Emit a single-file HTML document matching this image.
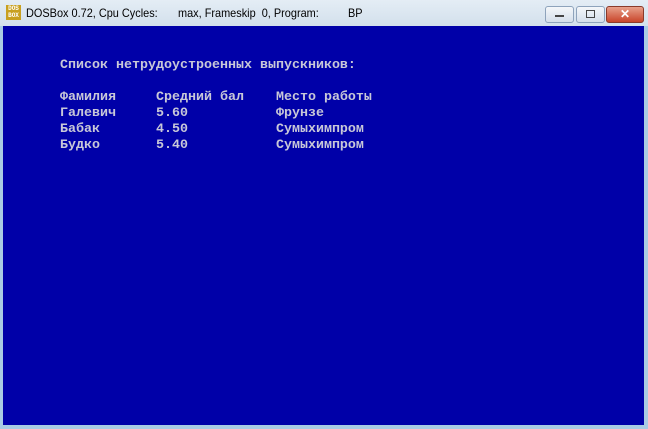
<!DOCTYPE html>
<html><head><meta charset="utf-8"><style>
body{margin:0;width:648px;height:429px;overflow:hidden;background:#a9cbe4;font-family:"Liberation Sans",sans-serif;position:relative}
.tb{position:absolute;left:0;top:0;width:648px;height:26px;background:linear-gradient(#e4edf5,#d3e0ec);}
.scr{position:absolute;left:3px;top:26px;width:641px;height:399px;background:#0000a8;}
.t{position:absolute;font-family:"Liberation Mono","DejaVu Sans Mono",monospace;font-size:13.33px;line-height:16px;color:#c8c8d8;white-space:pre;font-weight:bold}
.ttl{position:absolute;top:6px;font-size:12px;color:#000;white-space:pre;transform-origin:0 0;transform:scaleX(0.91)}
.ic{position:absolute;left:6px;top:5px;width:15px;height:15px;background:#c8a020;font-size:6px;line-height:7px;color:#fff;text-align:center;font-weight:bold;font-family:"Liberation Mono",monospace}
.b{position:absolute;top:6px;height:15px;border:1px solid #8ea3bb;border-radius:3px;background:linear-gradient(#f4f7fa,#d5dfea)}
</style></head><body>
<div class="tb"></div>
<div class="ic">DOS<br>BOX</div>
<div class="ttl" style="left:26px">DOSBox 0.72, Cpu Cycles:</div>
<div class="ttl" style="left:178px">max, Frameskip  0, Program:</div>
<div class="ttl" style="left:348px">BP</div>
<div class="b" style="left:545px;width:27px"><div style="position:absolute;left:9px;top:8px;width:9px;height:2px;background:#444"></div></div>
<div class="b" style="left:576px;width:27px"><div style="position:absolute;left:9px;top:3px;width:7px;height:6px;border:1px solid #444"></div></div>
<div class="b" style="left:606px;width:36px;background:linear-gradient(#e8a08a,#c8452a);border-color:#8a3a2a;color:#fff;text-align:center;font-size:12px;font-weight:bold;line-height:15px">✕</div>
<div class="scr"></div>
<div class="t" style="left:60px;top:58px">Список нетрудоустроенных выпускников:

Фамилия     Средний бал    Место работы
Галевич     5.60           Фрунзе
Бабак       4.50           Сумыхимпром
Будко       5.40           Сумыхимпром</div>
</body></html>
